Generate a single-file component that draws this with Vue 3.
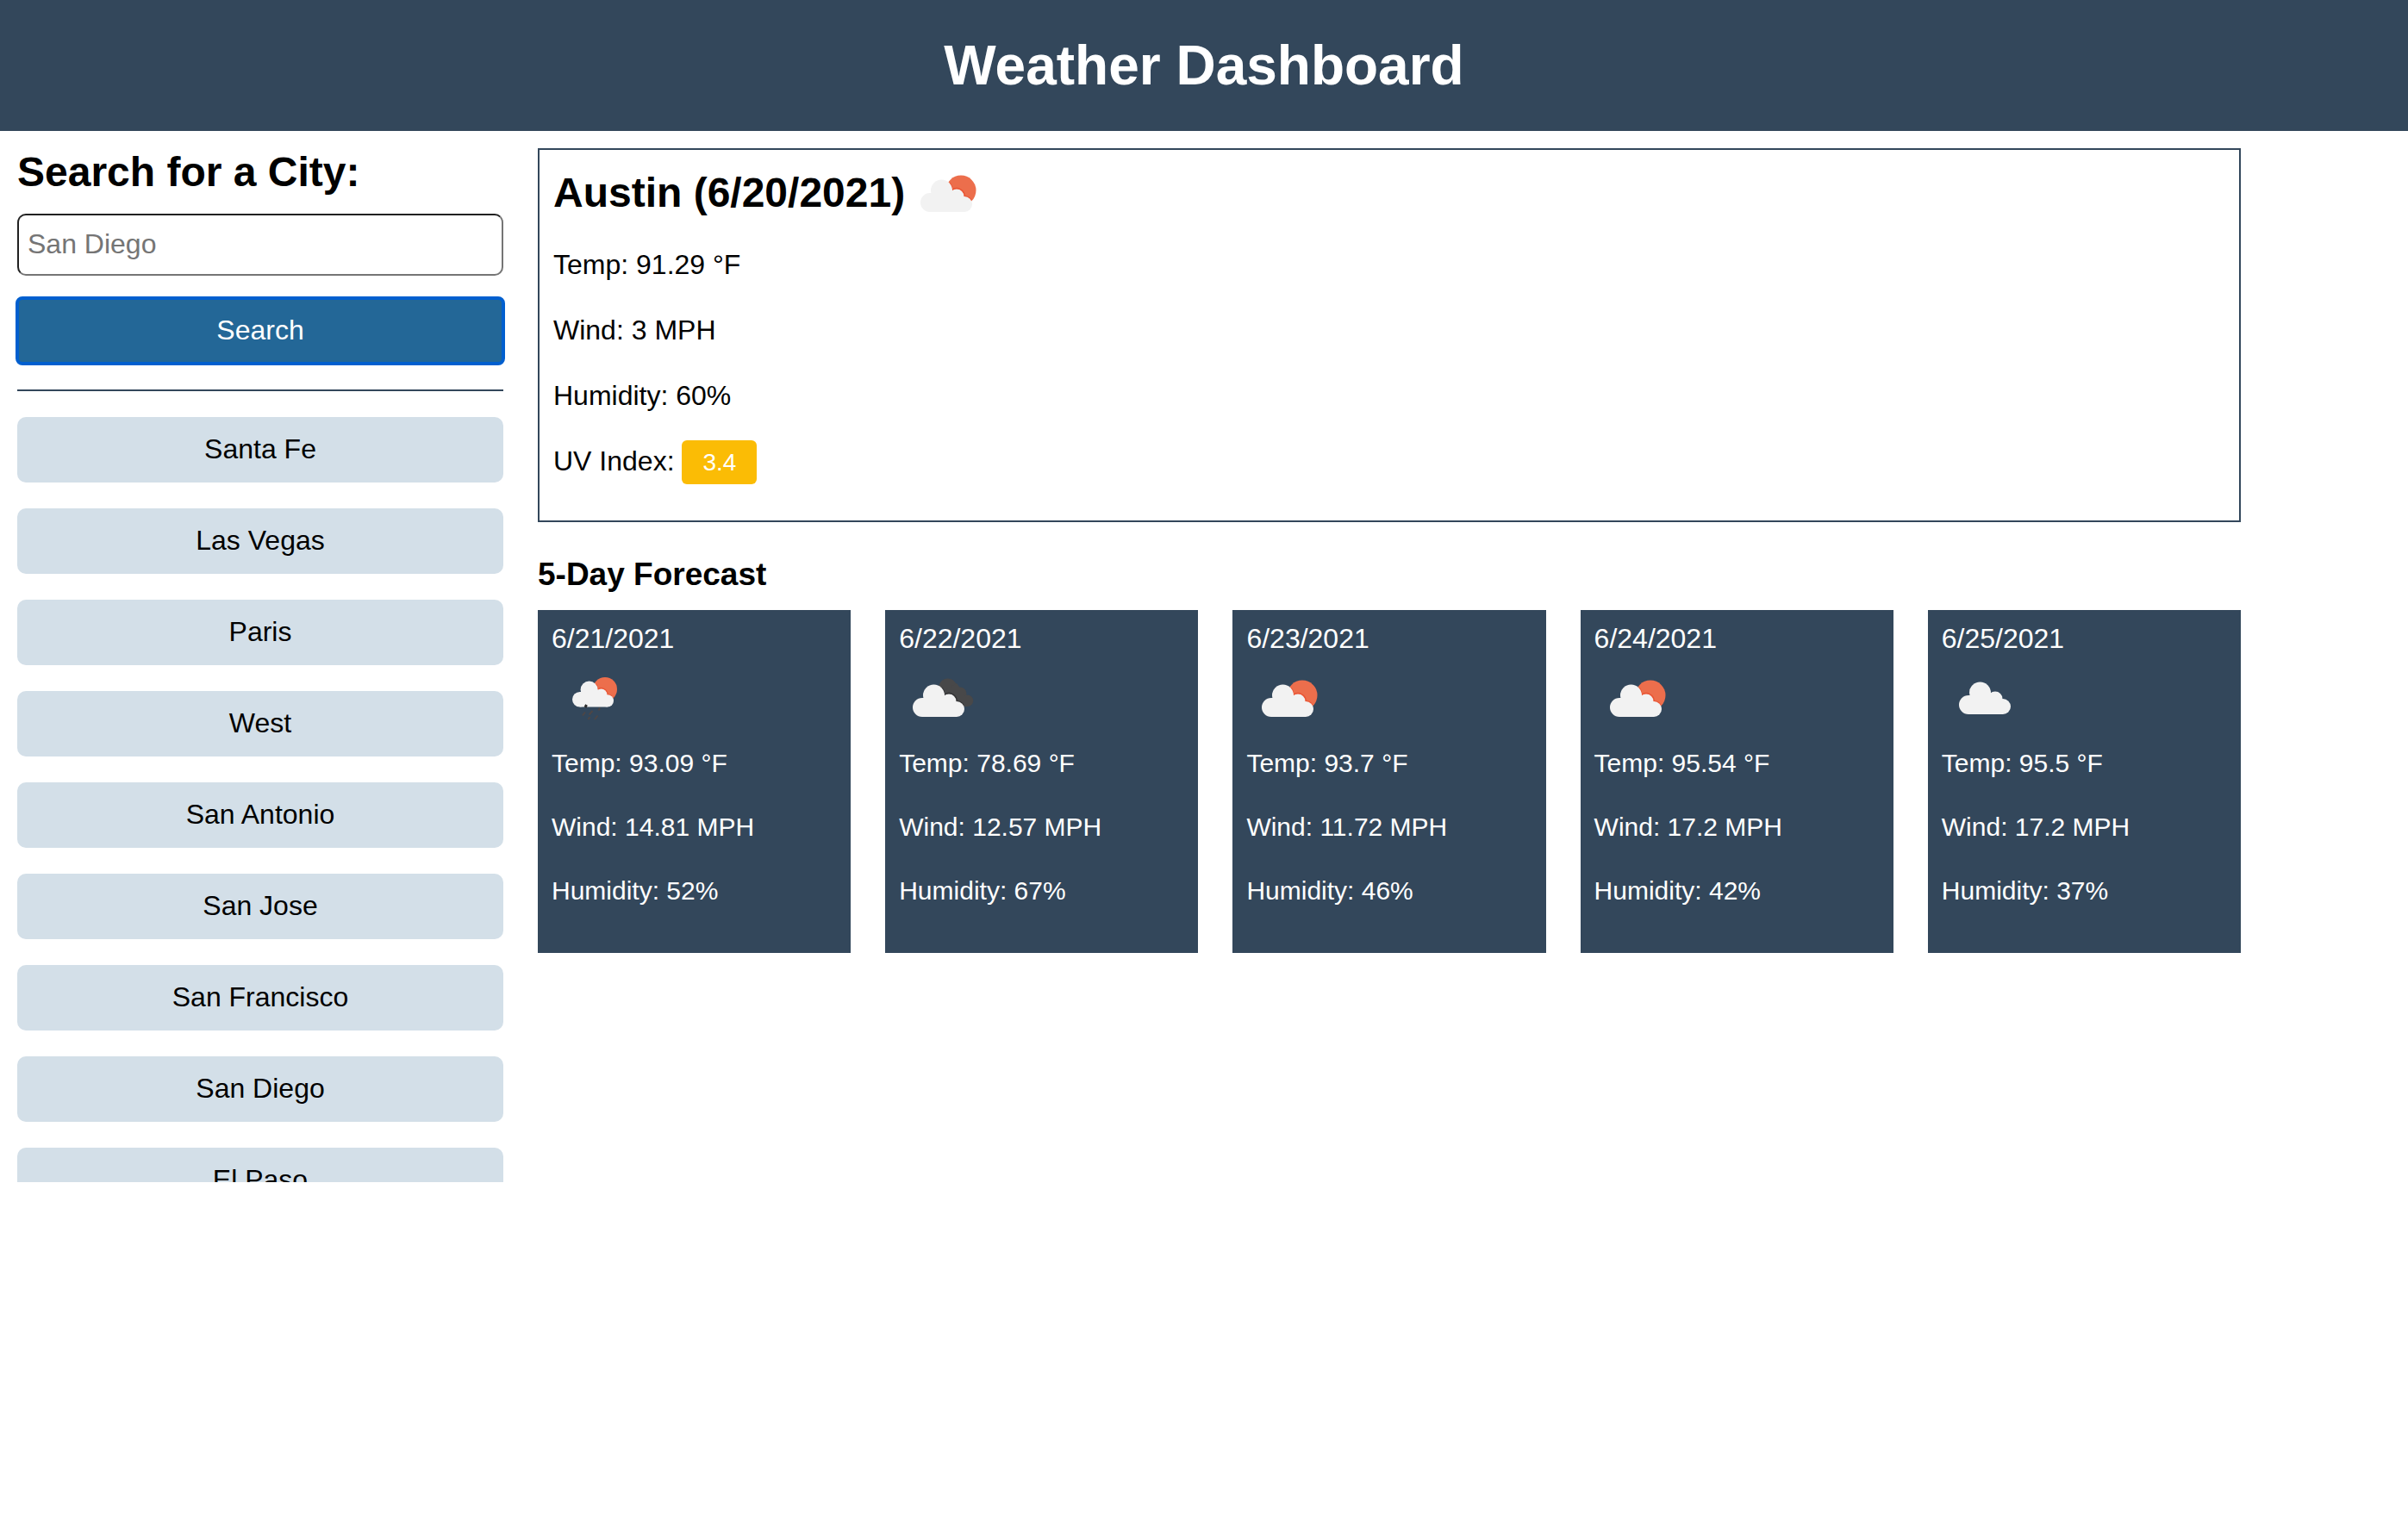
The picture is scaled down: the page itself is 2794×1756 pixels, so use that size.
<script setup>
import { h, ref } from 'vue'

const query = ref('')

const cities = [
  'Santa Fe',
  'Las Vegas',
  'Paris',
  'West',
  'San Antonio',
  'San Jose',
  'San Francisco',
  'San Diego',
  'El Paso',
]

const current = {
  city: 'Austin',
  date: '6/20/2021',
  temp: '91.29',
  wind: '3',
  humidity: '60',
  uv: '3.4',
}

const forecast = [
  { date: '6/21/2021', icon: 'rain', temp: '93.09', wind: '14.81', humidity: '52' },
  { date: '6/22/2021', icon: 'broken', temp: '78.69', wind: '12.57', humidity: '67' },
  { date: '6/23/2021', icon: 'few', temp: '93.7', wind: '11.72', humidity: '46' },
  { date: '6/24/2021', icon: 'few', temp: '95.54', wind: '17.2', humidity: '42' },
  { date: '6/25/2021', icon: 'cloud', temp: '95.5', wind: '17.2', humidity: '37' },
]

const cloud = (transform) =>
  h('g', { fill: '#f2f2f2', transform }, [
    h('circle', { cx: 29, cy: 58, r: 11 }),
    h('circle', { cx: 42.5, cy: 44, r: 12.5 }),
    h('circle', { cx: 60, cy: 51, r: 8.5 }),
    h('circle', { cx: 69, cy: 60, r: 9 }),
    h('path', { d: 'M29 47h4l10-3 12 0 7 6 7 10v9H29z' }),
  ])

const edge = (stroke, transform) =>
  h('path', {
    d: 'M52 35.500a13 13 0 0 1 2.500 7.500M55 43.500a9 9 0 0 1 14 7.500a9.500 9.500 0 0 1 7.500 4',
    fill: 'none',
    stroke,
    'stroke-width': 2,
    transform,
  })

const shapes = {
  few: () => [
    h('circle', { cx: 65, cy: 44, r: 17.5, fill: '#ec6e4c' }),
    edge('#ea5433'),
    cloud(),
  ],
  cloud: () => [cloud('translate(2 -3)')],
  broken: () => [
    h('g', { fill: '#484849' }, [
      h('circle', { cx: 56.7, cy: 35.3, r: 10.7 }),
      h('circle', { cx: 71, cy: 42, r: 7.5 }),
      h('circle', { cx: 79.5, cy: 50.3, r: 6.7 }),
      h('path', { d: 'M50 40l17-10 6 8 6 12v7l-7 0-20-8z' }),
    ]),
    edge('#333335', 'translate(-2 0)'),
    cloud('translate(-2 0)'),
  ],
  rain: () => [
    h('circle', { cx: 62, cy: 37, r: 14, fill: '#ec6e4c' }),
    edge('#ea5433', 'translate(9.6 2.4) scale(.8)'),
    cloud('translate(9.6 2.4) scale(.8)'),
    h('path', { d: 'M40.500 55l-1.500 3', stroke: '#2b2b2b', 'stroke-width': 3 }),
    h('path', {
      d: 'M39 63.500l-3 4M47.500 62l-4 4.500M56 58.500l-1.500 3M44.500 69l-2 3M53.500 67.500l-3.500 4.500',
      stroke: '#4d4646',
      'stroke-width': 2,
    }),
  ],
}

const WeatherIcon = (props) =>
  h('svg', { viewBox: '0 17 100 60', width: 100, height: 60, 'aria-hidden': 'true' }, shapes[props.name]())
WeatherIcon.props = ['name']
</script>

<template>
  <div class="page">
    <header class="banner">
      <h1>Weather Dashboard</h1>
    </header>
    <div class="content">
      <aside class="sidebar">
        <form @submit.prevent>
          <h2><label for="city">Search for a City:</label></h2>
          <input id="city" v-model="query" type="text" placeholder="San Diego" />
          <button class="search" type="submit">Search</button>
        </form>
        <div class="history">
          <button v-for="city in cities" :key="city" type="button">{{ city }}</button>
        </div>
      </aside>
      <main>
        <section class="current">
          <h2>
            <span>{{ current.city }} ({{ current.date }})</span>
            <WeatherIcon name="few" />
          </h2>
          <p>Temp: {{ current.temp }} °F</p>
          <p>Wind: {{ current.wind }} MPH</p>
          <p>Humidity: {{ current.humidity }}%</p>
          <p>UV Index: <span class="uv">{{ current.uv }}</span></p>
        </section>
        <section>
          <h3>5-Day Forecast</h3>
          <div class="cards">
            <article v-for="day in forecast" :key="day.date" class="card">
              <h4>{{ day.date }}</h4>
              <WeatherIcon :name="day.icon" />
              <p>Temp: {{ day.temp }} °F</p>
              <p>Wind: {{ day.wind }} MPH</p>
              <p>Humidity: {{ day.humidity }}%</p>
            </article>
          </div>
        </section>
      </main>
    </div>
  </div>
</template>

<style>
body {
  margin: 0;
  background: #fff;
}
</style>

<style scoped>
.page {
  font-family: "Liberation Sans", Arial, Helvetica, sans-serif;
  font-size: 32px;
  line-height: 36px;
  color: #000;
}
.page * {
  box-sizing: border-box;
}
h1,
h2,
h3,
h4,
p {
  margin: 0;
}
.banner {
  padding: 40px 20px;
  background: #33475b;
  color: #fff;
  text-align: center;
}
h1 {
  font-size: 64px;
  line-height: 72px;
}
h2 {
  font-size: 48px;
  line-height: 56px;
}
.content {
  display: grid;
  grid-template-columns: minmax(0, 564fr) minmax(0, 1976fr) minmax(0, 154fr);
  column-gap: 40px;
  align-items: start;
  padding: 20px 0 0 20px;
}
form {
  display: flex;
  flex-direction: column;
  padding-bottom: 30px;
  border-bottom: 2px solid #33475b;
}
input,
button {
  font: inherit;
  width: 100%;
}
input {
  height: 72px;
  margin: 20px 0 26px;
  padding: 0 10px 2px;
  border: 2px solid;
  border-color: #212121 #757575 #757575 #212121;
  border-radius: 10px;
  background: #fff;
}
input::placeholder {
  color: #757575;
  opacity: 1;
}
button {
  display: block;
  flex: none;
  padding: 19px 20px 21px;
  border: 0;
  border-radius: 10px;
  background: #d3dfe8;
  color: #000;
}
.search {
  border-radius: 6px;
  background: #236797;
  color: #fff;
  outline: 4px solid #005fcf;
  outline-offset: -2px;
}
.history {
  display: flex;
  flex-direction: column;
  gap: 30px;
  max-height: 888px;
  margin-top: 30px;
  overflow-y: auto;
  scrollbar-width: none;
}
.current {
  padding: 20px 16px 51px;
  border: 2px solid #33475b;
}
.current h2 {
  display: flex;
  align-items: center;
  margin-bottom: 35px;
}
.current p + p {
  margin-top: 40px;
}
.uv {
  padding: 10px 24px;
  border-radius: 6px;
  background: #fbbc05;
  color: #fff;
  font-size: 28px;
  line-height: 28px;
}
h3 {
  margin: 39px 0 19px;
  font-size: 37px;
  line-height: 44px;
}
.cards {
  display: grid;
  grid-template-columns: repeat(5, minmax(0, 1fr));
  gap: 40px;
}
.card {
  padding: 15px 16px 55px;
  background: #33475b;
  color: #fff;
  font-size: 30px;
  line-height: 34px;
}
.card h4 {
  font-size: 32px;
  font-weight: 400;
  line-height: 36px;
}
.card svg {
  display: block;
  margin: 21px 0 29px;
}
.card p + p {
  margin-top: 40px;
}
</style>
